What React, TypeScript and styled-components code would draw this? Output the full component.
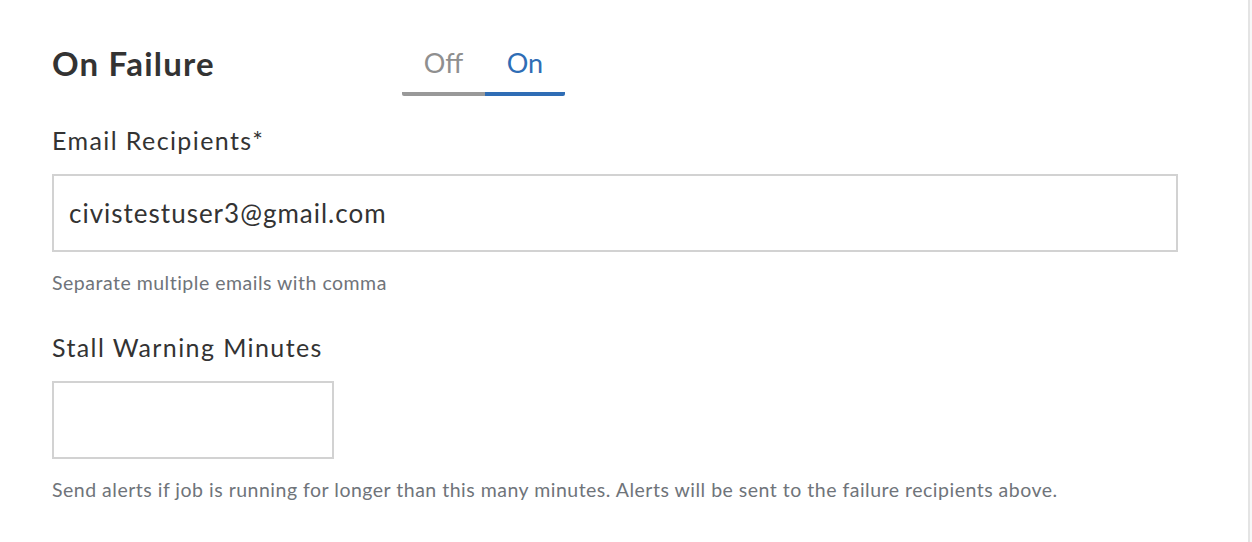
import { useState } from 'react';
import styled, { createGlobalStyle } from 'styled-components';

const GlobalStyle = createGlobalStyle`
  html, body {
    margin: 0;
    padding: 0;
    background: #fff;
  }

  body {
    font-family: Lato, 'Open Sans', sans-serif;
    color: #333;
  }
`;

const Shell = styled.div`
  display: flex;
  min-height: 542px;
`;

const Panel = styled.section`
  flex: 1;
  padding: 0 0 0 52px;
  border-right: 2px solid #e4e4e4;
`;

const Gutter = styled.div`
  width: 2px;
  background: #f7f7f7;
`;

const Header = styled.div`
  display: flex;
  align-items: flex-start;
  margin-top: 42px;
`;

const Heading = styled.h2`
  width: 350px;
  margin: 1px 0 0;
  font-size: 33px;
  line-height: 40px;
  font-weight: 700;
  letter-spacing: 1.2px;
  color: #333;
`;

const Toggle = styled.div`
  display: flex;
  margin-top: 1px;
`;

const Tab = styled.button<{ $active: boolean }>`
  width: 83px;
  padding: 0 0 9px;
  border: none;
  border-bottom: 4px solid ${({ $active }) => ($active ? '#2f6db5' : '#999')};
  background: none;
  font-family: inherit;
  font-size: 27px;
  line-height: 40px;
  color: ${({ $active }) => ($active ? '#2f6db5' : '#8f8f8f')};
  cursor: pointer;

  &:first-child {
    border-bottom-left-radius: 2px;
  }

  &:last-child {
    width: 80px;
    border-bottom-right-radius: 2px;
  }
`;

const Field = styled.div<{ $gap: number }>`
  margin-top: ${({ $gap }) => $gap}px;
`;

const Label = styled.label`
  display: block;
  font-size: 25px;
  line-height: 28px;
  letter-spacing: 1.4px;
  color: #333;
`;

const Input = styled.input<{ $width: string }>`
  display: block;
  box-sizing: border-box;
  width: ${({ $width }) => $width};
  height: 78px;
  margin-top: 20px;
  padding: 0 15px;
  border: 2px solid #d2d2d2;
  border-radius: 0;
  outline: none;
  font-family: inherit;
  font-size: 26px;
  letter-spacing: 1px;
  color: #333;
`;

const Help = styled.p`
  margin: 19px 0 0;
  font-size: 19.5px;
  line-height: 24px;
  letter-spacing: 0.5px;
  color: #6f747a;
`;

const App = () => {
  const [on, setOn] = useState(true);
  const [emails, setEmails] = useState('civistestuser3@gmail.com');
  const [minutes, setMinutes] = useState('');

  return (
    <>
      <GlobalStyle />
      <Shell>
        <Panel>
          <Header>
            <Heading>On Failure</Heading>
            <Toggle>
              <Tab $active={!on} onClick={() => setOn(false)}>
                Off
              </Tab>
              <Tab $active={on} onClick={() => setOn(true)}>
                On
              </Tab>
            </Toggle>
          </Header>

          <Field $gap={30}>
            <Label>Email Recipients*</Label>
            <Input
              $width='1126px'
              value={emails}
              onChange={(e) => setEmails(e.target.value)}
            />
            <Help>Separate multiple emails with comma</Help>
          </Field>

          <Field $gap={38}>
            <Label>Stall Warning Minutes</Label>
            <Input
              $width='282px'
              value={minutes}
              onChange={(e) => setMinutes(e.target.value)}
            />
            <Help>
              Send alerts if job is running for longer than this many minutes.
              Alerts will be sent to the failure recipients above.
            </Help>
          </Field>
        </Panel>
        <Gutter />
      </Shell>
    </>
  );
};

export default App;
